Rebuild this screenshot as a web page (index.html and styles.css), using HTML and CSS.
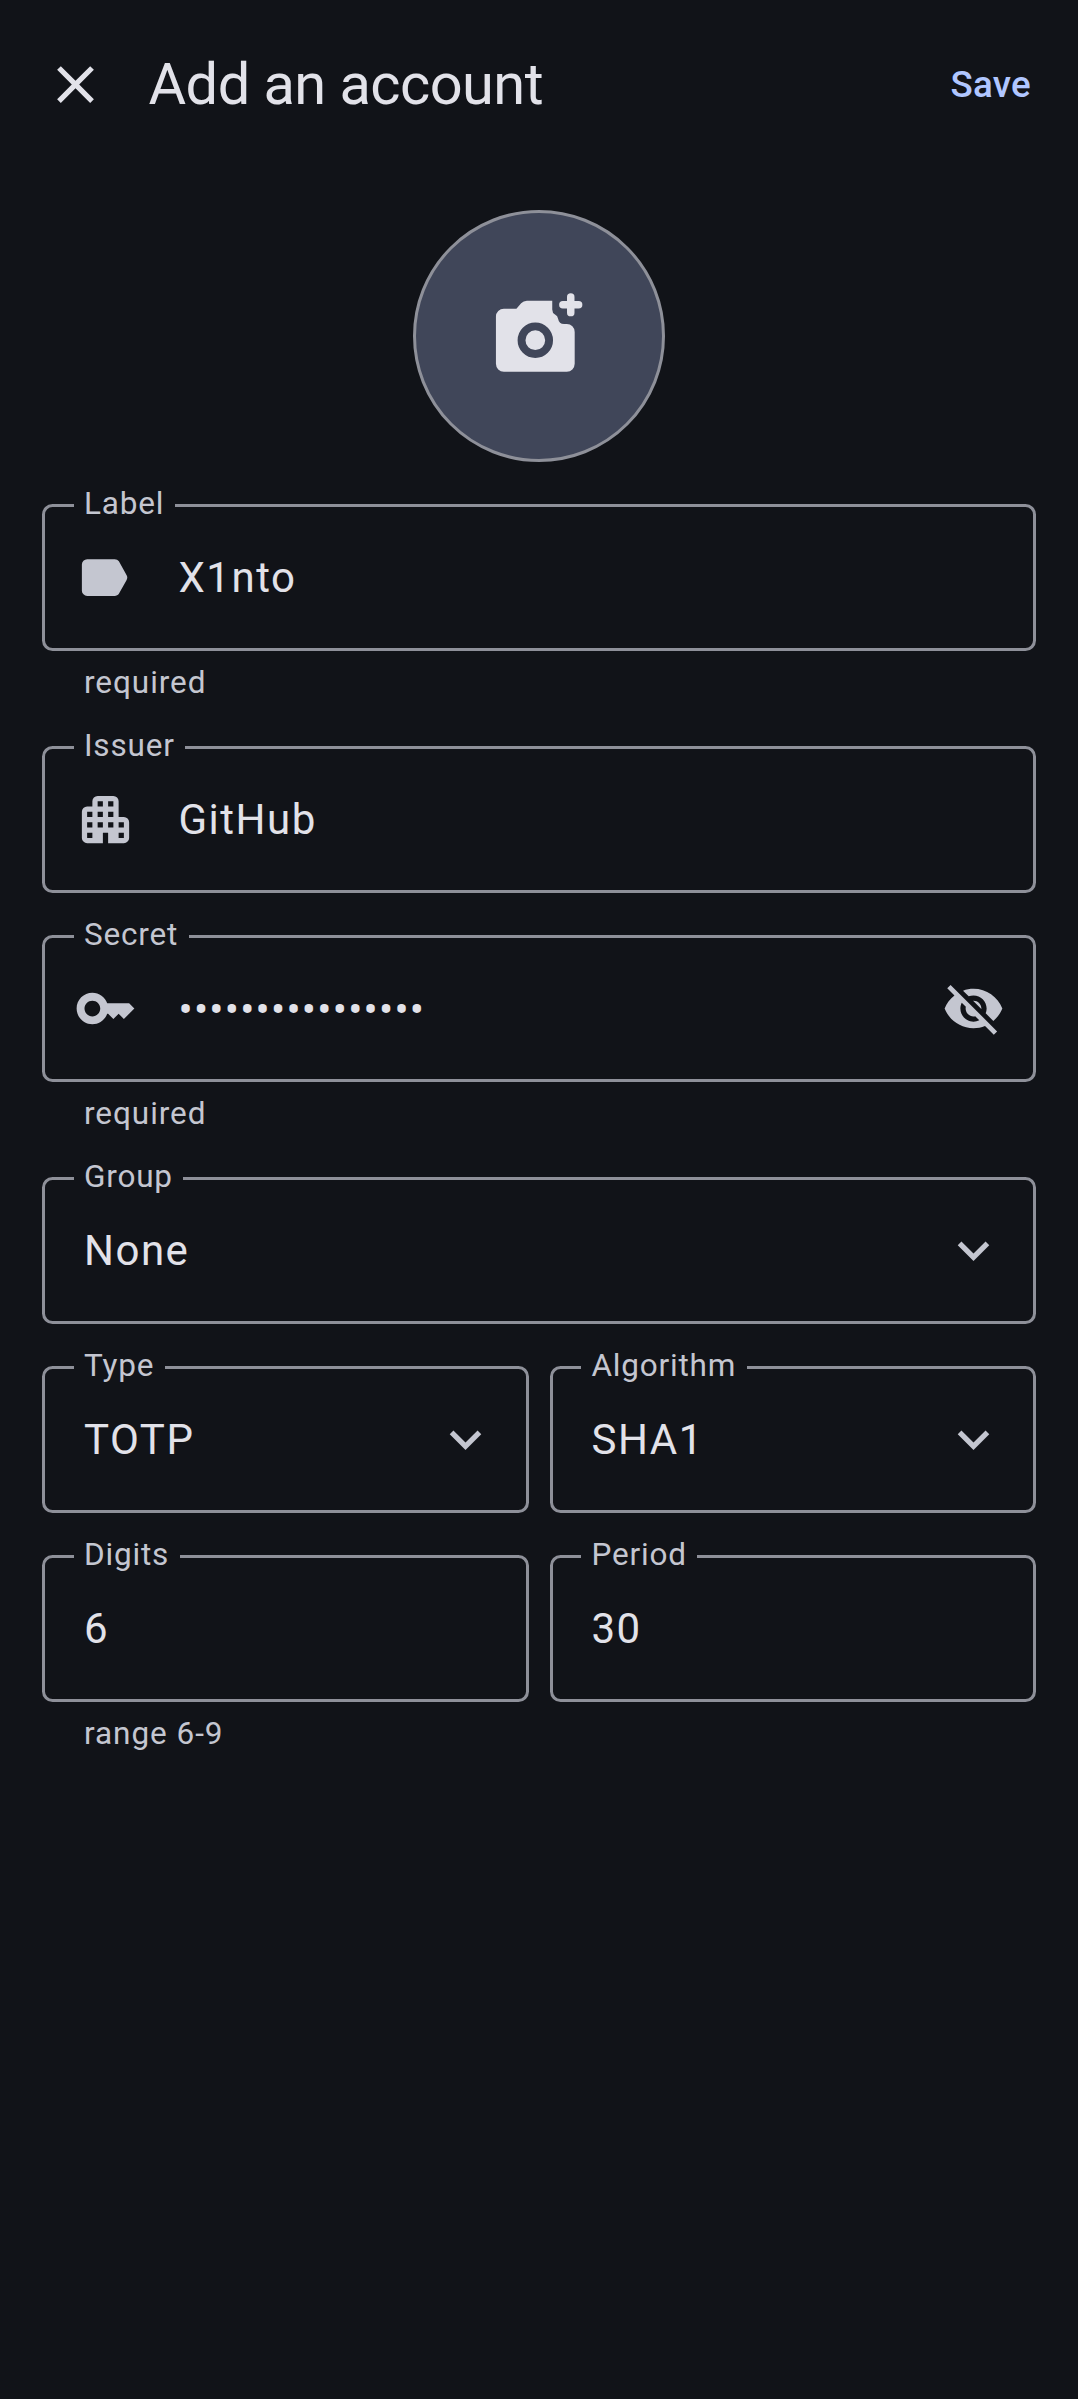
FILE: index.html
```html
<!DOCTYPE html>
<html lang="en">
  <head>
    <meta charset="UTF-8" />
    <meta name="viewport" content="width=device-width, initial-scale=1.0" />
    <title>Add an account</title>
    <link rel="stylesheet" href="styles.css">
  </head>

  <body>
    <header class="toolbar">
      <svg class="icon close-icon" viewBox="0 0 24 24"><path d="M19 6.41 17.59 5 12 10.59 6.41 5 5 6.41 10.59 12 5 17.59 6.41 19 12 13.41 17.59 19 19 17.59 13.41 12z"/></svg>
      <h1 class="title">Add an account</h1>
      <span class="save">Save</span>
    </header>

    <main>
      <div class="avatar-wrap">
        <div class="avatar">
          <svg class="camera-icon" viewBox="0 0 24 24">
            <path d="M3 21a2 2 0 0 1-2-2V7a2 2 0 0 1 2-2h3.2l1.2-1.35A2 2 0 0 1 8.9 3H15.3v2.2q0 .9.7 1.3.7.3.8 1.1.2 1.2 1.5 1.3H19a2 2 0 0 1 2 2V19a2 2 0 0 1-2 2z"/>
            <circle class="lens" cx="11" cy="13" r="3.5"/>
            <path class="plus" d="M20 2v4M18 4h4"/>
          </svg>
        </div>
      </div>

      <div class="field has-icon">
        <span class="field-label">Label</span>
        <svg class="icon" viewBox="0 0 24 24"><path d="M5 19q-.8 0-1.4-.6T3 17V7q0-.8.6-1.4T5 5h10.5q.5 0 .9.2t.7.6l2.9 5.2q.3.5.3 1t-.3 1l-2.9 5.2q-.3.4-.7.6t-.9.2z"/></svg>
        <span class="value">X1nto</span>
      </div>
      <p class="helper">required</p>

      <div class="field has-icon">
        <span class="field-label">Issuer</span>
        <svg class="icon building" viewBox="0 0 24 24"><path d="M3 19V9a2 2 0 0 1 2-2h2V5a2 2 0 0 1 2-2h6a2 2 0 0 1 2 2v6h2a2 2 0 0 1 2 2v6a2 2 0 0 1-2 2h-6v-4h-2v4H5a2 2 0 0 1-2-2zM5 9h2v2H5zm0 4h2v2H5zm0 4h2v2H5zM9 5h2v2H9zm0 4h2v2H9zm0 4h2v2H9zm4-8h2v2h-2zm0 4h2v2h-2zm0 4h2v2h-2zm4 0h2v2h-2zm0 4h2v2h-2z"/></svg>
        <span class="value">GitHub</span>
      </div>

      <div class="field has-icon">
        <span class="field-label">Secret</span>
        <svg class="icon" viewBox="0 0 24 24"><path d="M21 10h-8.35C11.83 7.67 9.61 6 7 6c-3.31 0-6 2.69-6 6s2.69 6 6 6c2.61 0 4.83-1.67 5.65-4H13l2 2 2-2 2 2 4-4.04L21 10zM7 15c-1.65 0-3-1.35-3-3s1.35-3 3-3 3 1.35 3 3-1.35 3-3 3z"/></svg>
        <span class="value secret">••••••••••••••••</span>
        <svg class="icon trailing" viewBox="0 0 24 24"><path d="M12 7c2.76 0 5 2.24 5 5 0 .65-.13 1.26-.36 1.83l2.92 2.92c1.51-1.26 2.7-2.89 3.43-4.75-1.73-4.39-6-7.5-11-7.5-1.4 0-2.74.25-3.98.7l2.16 2.16C10.74 7.13 11.35 7 12 7zM2 4.27l2.28 2.28.46.46C3.08 8.3 1.78 10.02 1 12c1.73 4.39 6 7.5 11 7.5 1.55 0 3.03-.3 4.38-.84l.42.42L19.73 22 21 20.73 3.27 3 2 4.27zM7.53 9.8l1.55 1.55c-.05.21-.08.43-.08.65 0 1.66 1.34 3 3 3 .22 0 .44-.03.65-.08l1.55 1.55c-.67.33-1.41.53-2.2.53-2.76 0-5-2.24-5-5 0-.79.2-1.53.53-2.2zm4.31-.78 3.15 3.15.02-.16c0-1.66-1.34-3-3-3l-.17.01z"/></svg>
      </div>
      <p class="helper">required</p>

      <div class="field">
        <span class="field-label">Group</span>
        <span class="value">None</span>
        <svg class="icon trailing" viewBox="0 0 24 24"><path d="M16.59 8.59 12 13.17 7.41 8.59 6 10l6 6 6-6z"/></svg>
      </div>

      <div class="row">
        <div class="field">
          <span class="field-label">Type</span>
          <span class="value">TOTP</span>
          <svg class="icon trailing" viewBox="0 0 24 24"><path d="M16.59 8.59 12 13.17 7.41 8.59 6 10l6 6 6-6z"/></svg>
        </div>
        <div class="field">
          <span class="field-label">Algorithm</span>
          <span class="value">SHA1</span>
          <svg class="icon trailing" viewBox="0 0 24 24"><path d="M16.59 8.59 12 13.17 7.41 8.59 6 10l6 6 6-6z"/></svg>
        </div>
      </div>

      <div class="row">
        <div class="col">
          <div class="field">
            <span class="field-label">Digits</span>
            <span class="value">6</span>
          </div>
          <p class="helper">range 6-9</p>
        </div>
        <div class="col">
          <div class="field">
            <span class="field-label">Period</span>
            <span class="value">30</span>
          </div>
        </div>
      </div>
    </main>
  </body>
</html>
```

FILE: styles.css
```css
* {
  box-sizing: border-box;
  margin: 0;
  padding: 0;
}

body {
  font-family: Roboto, "Noto Sans", sans-serif;
  background-color: #111318;
  color: #e2e2e9;
  min-height: 2399px;
}

.toolbar {
  display: flex;
  align-items: center;
  height: 168px;
  padding: 0 47px 0 43.5px;
}

.icon {
  flex: none;
  width: 63px;
  height: 63px;
  fill: #c4c6d0;
}

.close-icon {
  fill: #e2e2e9;
}

.building {
  fill-rule: evenodd;
}

.title {
  flex: 1;
  margin-left: 42px;
  font-size: 57.75px;
  font-weight: 400;
  letter-spacing: -0.55px;
}

.save {
  font-size: 36.75px;
  font-weight: 500;
  letter-spacing: 0.26px;
  color: #b0c6ff;
}

main {
  padding: 0 42px;
}

.avatar-wrap {
  display: flex;
  justify-content: center;
  padding: 42px 0;
}

.avatar {
  display: flex;
  align-items: center;
  justify-content: center;
  width: 252px;
  height: 252px;
  border: 3px solid #8e9099;
  border-radius: 50%;
  background-color: #404659;
}

.camera-icon {
  width: 94.5px;
  height: 94.5px;
  fill: #e2e2e9;
}

.lens {
  fill: none;
  stroke: #404659;
  stroke-width: 2;
}

.plus {
  fill: none;
  stroke: #e2e2e9;
  stroke-width: 1.9;
  stroke-linecap: round;
}

.field {
  position: relative;
  display: flex;
  align-items: center;
  height: 147px;
  padding: 0 28.5px 0 39px;
  border: 3px solid #8e9099;
  border-radius: 10.5px;
}

main > .field + .field,
.helper + .field,
.field + .row,
.row + .row {
  margin-top: 42px;
}

.has-icon {
  padding-left: 28.5px;
}

.has-icon .value {
  margin-left: 42px;
}

.field-label {
  position: absolute;
  top: -24.5px;
  left: 28.5px;
  padding: 0 10.5px;
  background-color: #111318;
  color: #c4c6d0;
  font-size: 31.5px;
  line-height: 42px;
  letter-spacing: 0.8px;
}

.value {
  font-size: 42px;
  letter-spacing: 1.5px;
}

.secret {
  position: relative;
  top: 1px;
  letter-spacing: 1.25px;
}

.trailing {
  margin-left: auto;
}

.helper {
  margin-top: 11px;
  padding-left: 42px;
  color: #c4c6d0;
  font-size: 31.5px;
  line-height: 42px;
  letter-spacing: 0.95px;
}

.row {
  display: flex;
  gap: 21px;
}

.row > .field,
.col {
  flex: 1;
}
```
